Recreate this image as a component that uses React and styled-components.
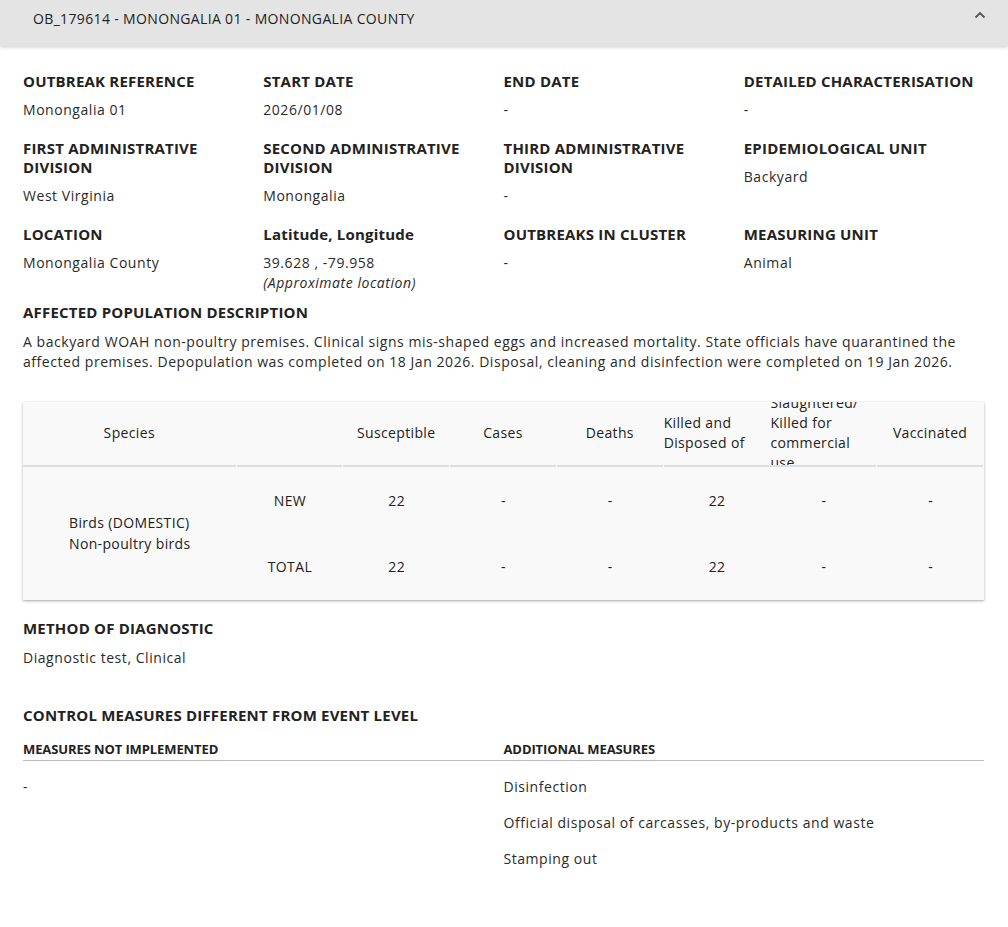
import React from "react";
import styled, { createGlobalStyle } from "styled-components";

const GlobalStyle = createGlobalStyle`
  html, body { margin: 0; padding: 0; background: #fff; }
  body {
    font-family: "Open Sans", "Noto Sans", sans-serif;
    color: #212121;
    -webkit-font-smoothing: antialiased;
  }
  * { box-sizing: border-box; }
`;

const Page = styled.div`
  width: 1008px;
  min-height: 927px;
  background: #fff;
`;

const Summary = styled.div`
  height: 46px;
  display: flex;
  align-items: center;
  justify-content: space-between;
  padding: 0 22px 10px 33px;
  background: #e4e4e4;
  box-shadow: 0 2px 3px rgba(0, 0, 0, 0.14);
  font-size: 14px;
  letter-spacing: 0.35px;
  color: #222;
`;

const Chevron = styled.svg`
  width: 12px;
  height: 8px;
  margin-top: -7px;
`;

const Body = styled.div`
  padding: 26px 24px 40px 23px;
`;

const FieldGrid = styled.div`
  display: grid;
  grid-template-columns: repeat(4, 1fr);
  row-gap: 19.5px;
  align-items: start;
`;

const Field = styled.div`
  display: flex;
  flex-direction: column;
  gap: 8.5px;
`;

const Label = styled.div`
  font-size: 15px;
  line-height: 19px;
  font-weight: 700;
  letter-spacing: 0.2px;
  color: #222;
  text-transform: ${(p) => (p.$plain ? "none" : "uppercase")};
`;

const Value = styled.div`
  font-size: 14px;
  line-height: 20px;
  letter-spacing: 0.55px;
  color: #2a2a2a;
`;

const Approx = styled.div`
  font-style: italic;
`;

const Section = styled.div`
  margin-top: ${(p) => p.$top || 0}px;
  display: flex;
  flex-direction: column;
  gap: ${(p) => p.$gap ?? 9.5}px;
`;

const Card = styled.div`
  margin-top: 30px;
  background: #f9f9f9;
  box-shadow: 0 1px 3px rgba(0, 0, 0, 0.28), 0 1px 1px rgba(0, 0, 0, 0.08);
  display: grid;
  grid-template-columns: repeat(9, 1fr);
  grid-template-rows: 65px 67px 66px;
  font-size: 14px;
  letter-spacing: 0.35px;
  color: #222;
`;

const HeadCell = styled.div`
  grid-column: span ${(p) => p.$span || 1};
  height: 65px;
  overflow: hidden;
  display: flex;
  align-items: center;
  justify-content: center;
  text-align: left;
  line-height: 20px;
  border-bottom: 2px solid #dedede;
  margin: 0 1px 0 0;
`;

const SpeciesCell = styled.div`
  grid-column: span 2;
  grid-row: span 2;
  display: flex;
  align-items: center;
  justify-content: center;
  line-height: 21px;
`;

const Cell = styled.div`
  display: flex;
  align-items: center;
  justify-content: center;
  text-align: center;
`;

const Measures = styled.div`
  margin-top: 16px;
  display: grid;
  grid-template-columns: 1fr 1fr;
`;

const MeasureHead = styled.div`
  font-size: 13px;
  line-height: 17px;
  font-weight: 700;
  letter-spacing: -0.1px;
  color: #222;
  text-transform: uppercase;
  padding-bottom: 2px;
  border-bottom: 1px solid #bdbdbd;
`;

const MeasureList = styled.div`
  display: flex;
  flex-direction: column;
  gap: 16px;
  padding-top: 16px;
  font-size: 14px;
  line-height: 20px;
  letter-spacing: 0.55px;
  color: #2a2a2a;
`;

const fields = [
  ["Outbreak reference", "Monongalia 01"],
  ["Start date", "2026/01/08"],
  ["End date", "-"],
  ["Detailed characterisation", "-"],
  ["First administrative division", "West Virginia"],
  ["Second administrative division", "Monongalia"],
  ["Third administrative division", "-"],
  ["Epidemiological unit", "Backyard"],
  ["Location", "Monongalia County"],
  ["Latitude, Longitude", null, true],
  ["Outbreaks in cluster", "-"],
  ["Measuring unit", "Animal"],
];

const headers = [
  "Susceptible",
  "Cases",
  "Deaths",
  "Killed and Disposed of",
  "Slaughtered/ Killed for commercial use",
  "Vaccinated",
];

const rows = [
  ["NEW", "22", "-", "-", "22", "-", "-"],
  ["TOTAL", "22", "-", "-", "22", "-", "-"],
];

export default function App() {
  return (
    <Page>
      <GlobalStyle />
      <Summary>
        <span>OB_179614 - MONONGALIA 01 - MONONGALIA COUNTY</span>
        <Chevron viewBox="0 0 12 8">
          <polyline points="1.5,6.5 6,2 10.5,6.5" fill="none" stroke="#555" strokeWidth="1.8" />
        </Chevron>
      </Summary>
      <Body>
        <FieldGrid>
          {fields.map(([label, value, plain]) => (
            <Field key={label}>
              <Label $plain={plain}>{label}</Label>
              {value !== null ? (
                <Value>{value}</Value>
              ) : (
                <Value>
                  39.628 , -79.958
                  <Approx>(Approximate location)</Approx>
                </Value>
              )}
            </Field>
          ))}
        </FieldGrid>

        <Section $top={10.5}>
          <Label>Affected population description</Label>
          <Value>
            A backyard WOAH non-poultry premises. Clinical signs mis-shaped eggs and increased
            mortality. State officials have quarantined the affected premises. Depopulation was
            completed on 18 Jan 2026. Disposal, cleaning and disinfection were completed on 19 Jan
            2026.
          </Value>
        </Section>

        <Card>
          <HeadCell $span={2}>Species</HeadCell>
          <HeadCell />
          {headers.map((h) => (
            <HeadCell key={h}>{h}</HeadCell>
          ))}
          <SpeciesCell>
            <div>
              Birds (DOMESTIC)
              <br />
              Non-poultry birds
            </div>
          </SpeciesCell>
          {rows.map((r) =>
            r.map((c, i) => <Cell key={r[0] + i}>{c}</Cell>)
          )}
        </Card>

        <Section $top={19.5}>
          <Label>Method of diagnostic</Label>
          <Value>Diagnostic test, Clinical</Value>
        </Section>

        <Section $top={38.5}>
          <Label>Control measures different from event level</Label>
        </Section>

        <Measures>
          <div>
            <MeasureHead>Measures not implemented</MeasureHead>
            <MeasureList>
              <div>-</div>
            </MeasureList>
          </div>
          <div>
            <MeasureHead>Additional measures</MeasureHead>
            <MeasureList>
              <div>Disinfection</div>
              <div>Official disposal of carcasses, by-products and waste</div>
              <div>Stamping out</div>
            </MeasureList>
          </div>
        </Measures>
      </Body>
    </Page>
  );
}
